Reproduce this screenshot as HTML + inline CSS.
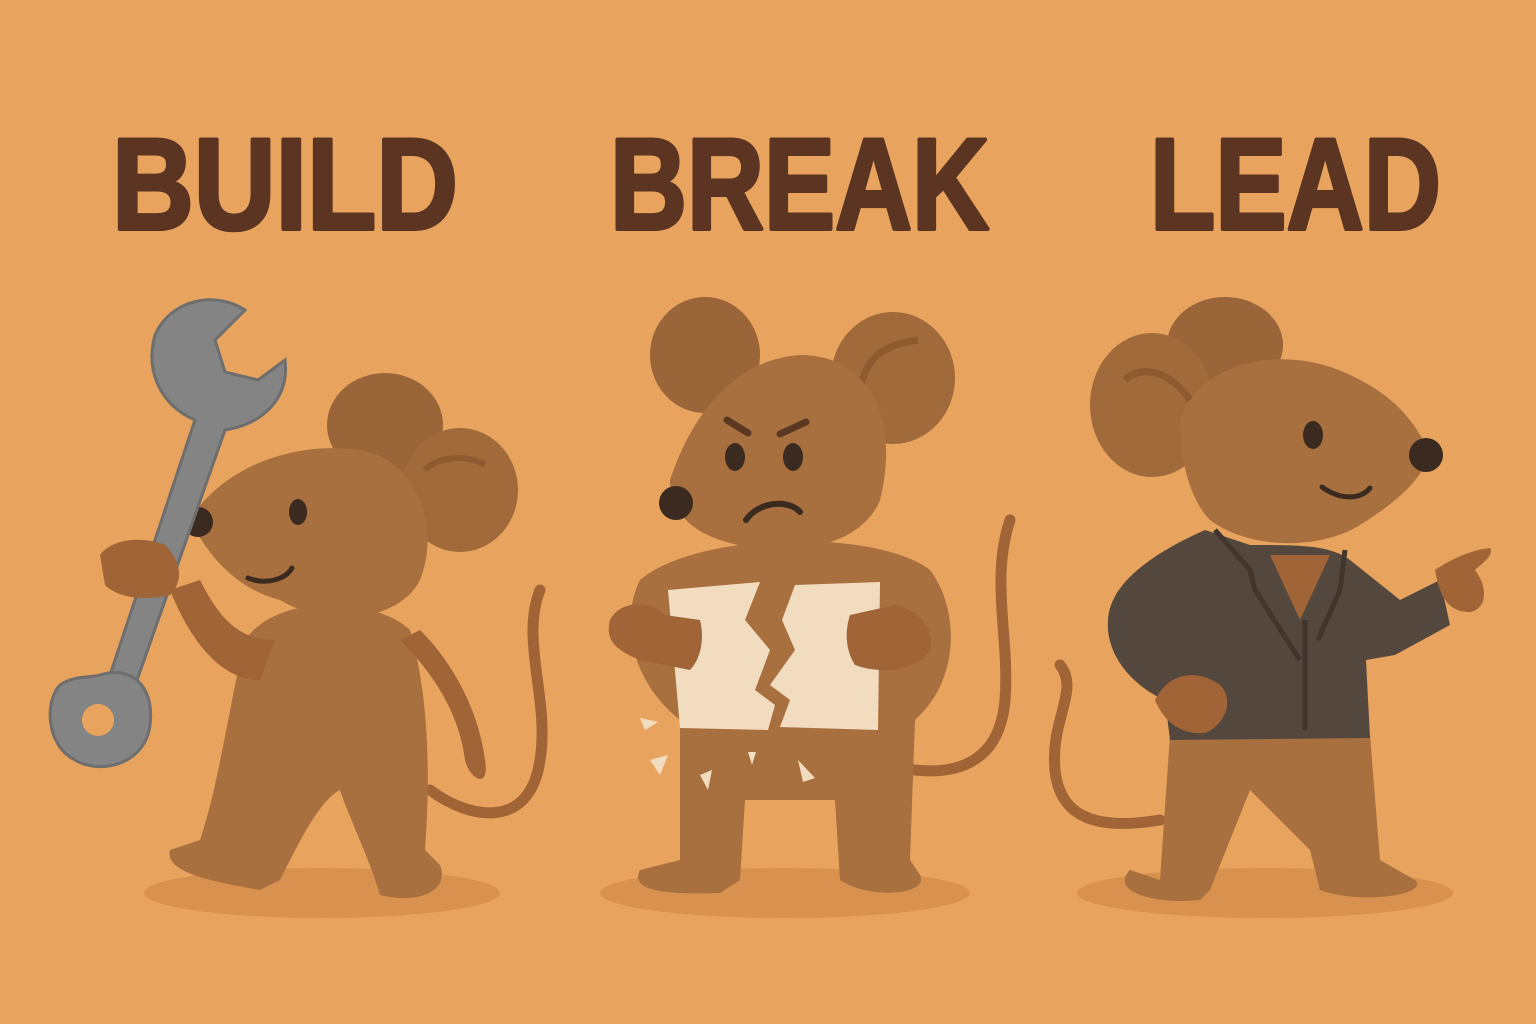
<!DOCTYPE html>
<html><head><meta charset="utf-8"><style>
html,body{margin:0;padding:0;background:#E8A45E;}
svg{display:block}
</style></head><body>
<svg width="1536" height="1024" viewBox="0 0 1536 1024" xmlns="http://www.w3.org/2000/svg">
<rect width="1536" height="1024" fill="#E8A45E"/>
<g font-family="Liberation Sans, sans-serif" font-weight="bold" font-size="130" fill="#5C3522" stroke="#5C3522" stroke-width="4" stroke-linejoin="round">
<text x="112" y="229" textLength="346" lengthAdjust="spacingAndGlyphs">BUILD</text>
<text x="610" y="229" textLength="379" lengthAdjust="spacingAndGlyphs">BREAK</text>
<text x="1150" y="229" textLength="291" lengthAdjust="spacingAndGlyphs">LEAD</text>
</g>
<ellipse cx="322" cy="893" rx="178" ry="25" fill="#D9914F"/>
<ellipse cx="785" cy="893" rx="185" ry="25" fill="#D9914F"/>
<ellipse cx="1265" cy="893" rx="188" ry="25" fill="#D9914F"/>

<g>
<path d="M430 790 C470 820 530 830 540 760 C550 700 520 640 540 590" stroke="#A06436" stroke-width="11" fill="none" stroke-linecap="round"/>
<path d="M245 640 C230 700 220 780 200 840 L170 850 C165 870 200 880 260 890 L280 880 C300 840 320 800 340 790 C350 820 370 860 380 895 C420 905 450 890 440 865 L425 850 C430 780 430 700 410 630 C380 600 280 590 245 640Z" fill="#A8703F"/>
<path d="M400 640 C440 680 460 720 465 760 C470 780 490 790 485 760 C480 720 460 670 420 630Z" fill="#A06436"/>
<ellipse cx="385" cy="425" rx="58" ry="52" fill="#9A6538"/>
<ellipse cx="460" cy="490" rx="58" ry="62" fill="#A06A3A"/>
<path d="M425 470 C440 455 470 455 485 465" stroke="#8E5A30" stroke-width="6" fill="none"/>
<path d="M190 520 C220 470 290 440 360 450 C420 460 440 530 420 580 C400 620 330 630 280 600 C240 590 210 560 190 520Z" fill="#A8703F"/>
<circle cx="198" cy="522" r="15" fill="#3A2A20"/>
<ellipse cx="298" cy="512" rx="9" ry="13" fill="#3A2A20"/>
<path d="M248 578 C265 585 285 580 292 568" stroke="#3A2A20" stroke-width="5" fill="none" stroke-linecap="round"/>
<path d="M170 590 C190 640 220 680 260 680 L275 640 C240 640 220 620 200 580Z" fill="#A06436"/>
<g fill="#848484" stroke="#6E6E6E" stroke-width="3">
<path d="M155 335 C170 300 215 290 245 310 L215 340 L225 372 L258 380 L285 360 C290 400 260 425 225 430 L130 700 L105 690 L195 420 C160 405 145 370 155 335Z"/>
<path d="M100 675 C130 665 155 685 150 725 C145 765 100 775 75 760 C45 745 45 700 60 685 C75 675 90 678 100 675Z"/>
</g>
<circle cx="98" cy="720" r="16" fill="#E8A45E"/>
<path d="M100 555 C110 540 140 535 165 545 C180 560 185 580 170 595 C150 600 120 600 105 585Z" fill="#A06436"/>
</g>

<g>
<path d="M915 770 C960 775 1000 760 1005 700 C1010 640 990 580 1010 520" stroke="#A06436" stroke-width="11" fill="none" stroke-linecap="round"/>
<path d="M640 580 C620 620 630 680 680 720 L680 860 L640 870 C630 890 660 895 720 893 L740 880 L745 800 L835 800 L840 880 C870 900 930 895 920 875 L910 860 L915 720 C960 680 960 610 930 570 C880 530 700 530 640 580Z" fill="#A8703F"/>
<ellipse cx="705" cy="355" rx="55" ry="58" fill="#9A6538"/>
<ellipse cx="893" cy="378" rx="62" ry="66" fill="#A06A3A"/>
<path d="M858 408 C860 360 880 345 918 340" stroke="#8E5A30" stroke-width="7" fill="none"/>
<path d="M670 480 C690 420 730 360 800 355 C870 355 900 420 880 500 C860 550 780 560 720 540 C690 530 670 510 670 480Z" fill="#A8703F"/>
<circle cx="676" cy="503" r="17" fill="#3A2A20"/>
<ellipse cx="735" cy="457" rx="10" ry="14" fill="#3A2A20"/>
<ellipse cx="793" cy="457" rx="10" ry="14" fill="#3A2A20"/>
<path d="M727 420 L748 433 M780 434 L806 422" stroke="#5A3822" stroke-width="7" stroke-linecap="round"/>
<path d="M746 520 C760 500 790 500 800 512" stroke="#3A2A20" stroke-width="6" fill="none" stroke-linecap="round"/>
<path d="M668 590 L760 582 L745 620 L770 650 L755 690 L775 705 L768 730 L680 728Z" fill="#F2DCC0"/>
<path d="M795 585 L880 582 L878 730 L780 727 L790 700 L770 685 L795 650 L782 620Z" fill="#F2DCC0"/>
<path d="M610 620 C620 600 650 600 665 615 L700 620 C705 640 700 660 690 670 L640 660 C615 650 605 640 610 620Z" fill="#A06436"/>
<path d="M850 615 L895 605 C920 610 935 630 930 650 C920 670 880 675 855 665 C845 650 845 630 850 615Z" fill="#A06436"/>
<g fill="#F2DCC0"><path d="M640 718 L658 722 L645 730Z"/><path d="M650 760 L668 755 L660 775Z"/><path d="M700 775 L712 770 L708 790Z"/><path d="M798 760 L815 778 L803 782Z"/><path d="M748 752 L756 752 L752 765Z"/></g>
</g>

<g>
<path d="M1160 820 C1100 830 1060 820 1055 770 C1050 720 1080 690 1060 665" stroke="#A06436" stroke-width="11" fill="none" stroke-linecap="round"/>
<path d="M1170 735 L1160 880 L1130 870 C1110 890 1150 905 1200 900 L1210 890 L1250 790 L1310 850 L1320 890 C1360 905 1430 895 1415 880 L1380 860 L1370 735Z" fill="#A8703F"/>
<ellipse cx="1225" cy="345" rx="58" ry="48" fill="#9A6538"/>
<ellipse cx="1152" cy="405" rx="62" ry="72" fill="#A06A3A"/>
<path d="M1125 380 C1140 365 1170 370 1190 400" stroke="#8E5A30" stroke-width="7" fill="none"/>
<path d="M1180 420 C1200 360 1290 340 1360 380 C1400 400 1420 430 1430 455 C1420 480 1400 500 1360 525 C1320 550 1250 550 1210 520 C1190 500 1180 460 1180 420Z" fill="#A8703F"/>
<circle cx="1426" cy="455" r="17" fill="#3A2A20"/>
<ellipse cx="1313" cy="435" rx="10" ry="14" fill="#3A2A20"/>
<path d="M1322 487 C1340 500 1360 500 1370 488" stroke="#3A2A20" stroke-width="5" fill="none" stroke-linecap="round"/>
<path d="M1205 530 C1160 550 1110 580 1108 620 C1105 660 1140 690 1165 700 L1170 740 L1370 738 L1366 660 L1395 655 L1450 625 L1440 580 L1400 600 L1350 560 C1330 545 1300 545 1250 545Z" fill="#54473D"/>
<path d="M1270 555 L1300 620 L1330 555Z" fill="#A06436"/>
<path d="M1215 530 L1250 570 L1255 590 L1300 660 M1345 550 L1340 590 L1318 640 M1305 620 L1305 730" stroke="#41362E" stroke-width="5" fill="none"/>
<path d="M1155 700 C1170 670 1200 670 1220 685 C1235 700 1225 725 1205 733 C1185 735 1165 725 1155 700Z" fill="#A06436"/>
<path d="M1435 570 C1450 560 1470 550 1490 548 C1495 555 1480 565 1475 570 C1490 590 1485 610 1470 612 C1450 612 1440 600 1435 570Z" fill="#A06436"/>
</g>
</svg>
</body></html>
